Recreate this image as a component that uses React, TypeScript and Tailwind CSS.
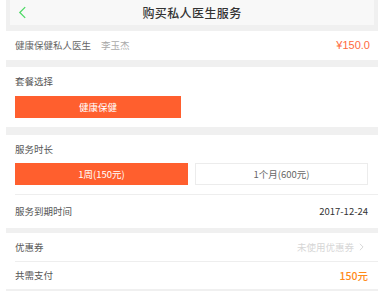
import React from 'react';

const font = { fontFamily: '"Noto Sans CJK SC", "Noto Sans", sans-serif' };

function Chevron({ className }: { className?: string }) {
  return (
    <svg viewBox="0 0 10 14" className={className} fill="none" stroke="currentColor" strokeWidth={1.4}>
      <path d="M8 1 L2 7 L8 13" />
    </svg>
  );
}

export default function App() {
  return (
    <div className="w-[388px] h-[291px] bg-white overflow-hidden pl-[6px]" style={font}>
      <div className="w-[372px] h-full bg-[#f0f0f0] flex flex-col">
        {/* header */}
        <div className="px-[4px] pb-[6px]">
          <div className="relative h-[25px] bg-[#f8f8f8] flex items-center justify-center">
            <Chevron className="absolute left-[8px] top-[6px] w-[9px] h-[13px] text-[#4cd964]" />
            <span className="text-[12px] font-medium text-[#333] tracking-[0.4px]">购买私人医生服务</span>
          </div>
        </div>

        <div className="h-[29px] bg-white flex items-center justify-between pl-[9px] pr-[8px]">
          <div className="flex items-center gap-[10px] text-[9.5px]">
            <span className="text-[#666]">健康保健私人医生</span>
            <span className="text-[#aaa]">李玉杰</span>
          </div>
          <span className="text-[11px] text-[#ff6a3d]" style={{ fontFamily: '"Liberation Sans", sans-serif' }}>¥150.0</span>
        </div>

        <div className="mt-[7px] h-[60px] bg-white pl-[9px] pt-[8px]">
          <div className="text-[9.5px] text-[#555] leading-[12px]">套餐选择</div>
          <div className="mt-[9px] w-[166px] h-[22px] bg-[#ff5f2e] flex items-center justify-center text-[9.5px] text-white">健康保健</div>
        </div>

        <div className="mt-[8px] bg-white">
          <div className="pl-[9px] pr-[10px] pt-[8px] pb-[9px]">
            <div className="text-[9.5px] text-[#555] leading-[12px]">服务时长</div>
            <div className="mt-[8px] flex gap-[7px]">
              <div className="w-[173px] h-[22px] bg-[#ff5f2e] flex items-center justify-center text-[9.5px] text-white">1周(150元)</div>
              <div className="w-[173px] h-[22px] border border-[#ececec] flex items-center justify-center text-[9.5px] text-[#666]">1个月(600元)</div>
            </div>
          </div>
          <div className="ml-[9px] border-t border-[#eeeeee]" />
          <div className="h-[33px] flex items-center justify-between pl-[9px] pr-[10px]">
            <span className="text-[9.5px] text-[#555]">服务到期时间</span>
            <span className="text-[9.5px] text-[#333]">2017-12-24</span>
          </div>
        </div>

        <div className="mt-[5px] bg-white">
          <div className="h-[28px] flex items-center justify-between pl-[9px] pr-[14px]">
            <span className="text-[9.5px] text-[#555]">优惠券</span>
            <div className="flex items-center gap-[5px] text-[#d6d6d6]">
              <span className="text-[9.5px]">未使用优惠券</span>
              <svg viewBox="0 0 6 10" className="w-[5px] h-[8px]" fill="none" stroke="currentColor" strokeWidth={1.2}>
                <path d="M1 1 L5 5 L1 9" />
              </svg>
            </div>
          </div>
          <div className="ml-[9px] border-t border-[#eeeeee]" />
          <div className="h-[27px] flex items-center justify-between pl-[9px] pr-[10px]">
            <span className="text-[9.5px] text-[#555]">共需支付</span>
            <span className="text-[10.5px] font-medium text-[#ff8a1a]">150元</span>
          </div>
        </div>
      </div>
    </div>
  );
}
